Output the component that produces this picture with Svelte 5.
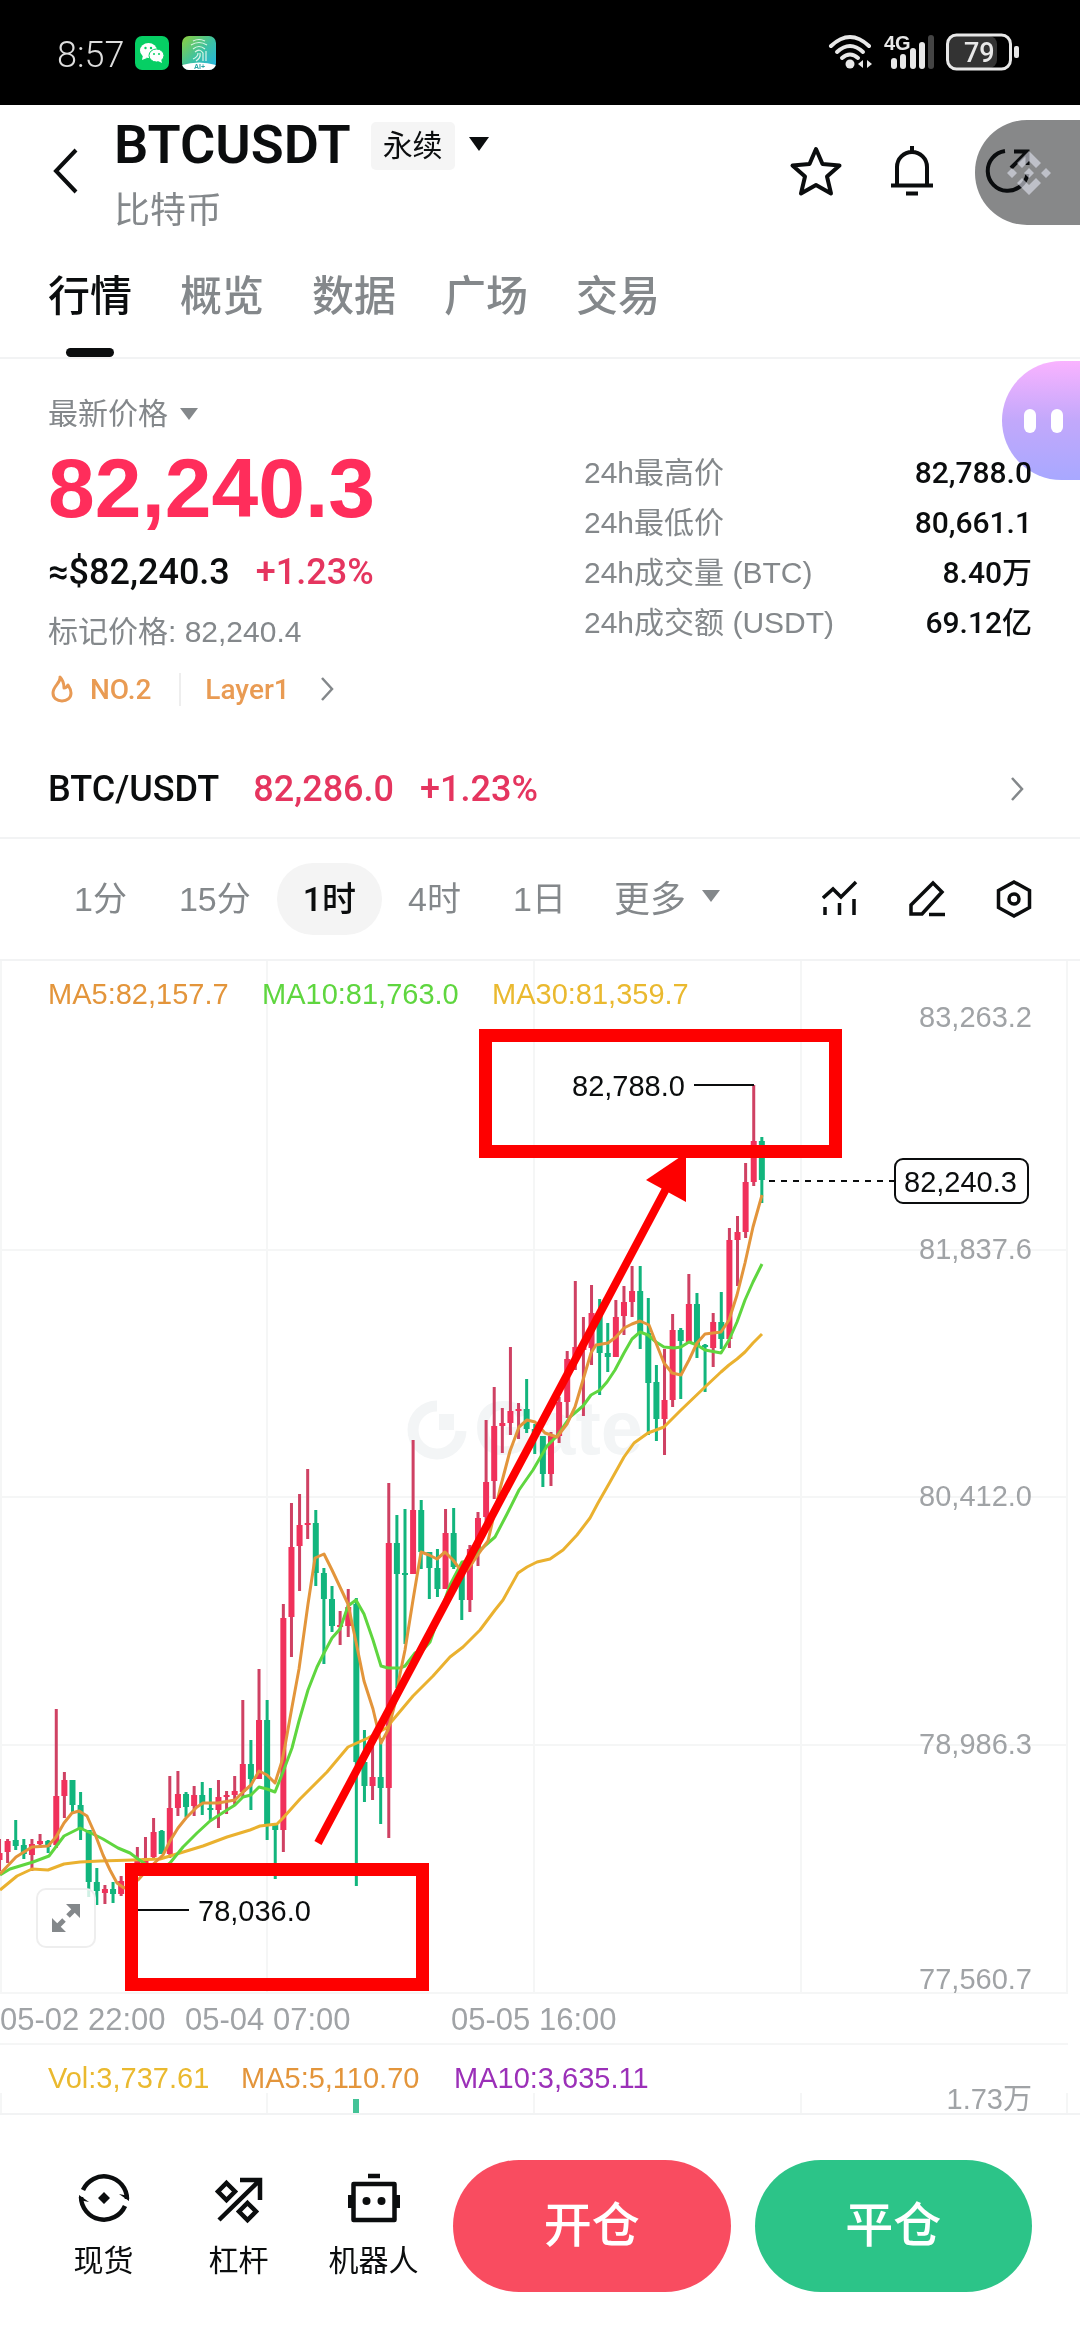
<script>
  const tabs = ['行情', '概览', '数据', '广场', '交易']
  const periods = ['1分', '15分', '1时', '4时', '1日']

  let activeTab = $state('行情')
  let activePeriod = $state('1时')

  const stats = [
    { label: '24h最高价', value: '82,788.0' },
    { label: '24h最低价', value: '80,661.1' },
    { label: '24h成交量 (BTC)', value: '8.40万' },
    { label: '24h成交额 (USDT)', value: '69.12亿' }
  ]

  const axis = [
    { y: 56, text: '83,263.2' },
    { y: 288, text: '81,837.6', line: true },
    { y: 535, text: '80,412.0', line: true },
    { y: 783, text: '78,986.3', line: true },
    { y: 1018, text: '77,560.7' }
  ]

  const dates = [
    { x: 0, text: '05-02 22:00' },
    { x: 185, text: '05-04 07:00' },
    { x: 451, text: '05-05 16:00' }
  ]

  const columns = [1, 267, 534, 801, 1067]

  // [rising, high, body top, body bottom, low] in chart units
  const candles = [
    [1, 878, 892, 899, 910], [1, 878, 880, 891, 902], [0, 859, 879, 885, 889],
    [0, 878, 884, 893, 898], [1, 878, 883, 894, 910], [1, 873, 880, 883, 887],
    [0, 879, 880, 886, 892], [1, 748, 835, 884, 887], [1, 811, 819, 835, 857],
    [0, 819, 819, 844, 852], [0, 831, 844, 869, 879], [0, 869, 869, 921, 936],
    [0, 907, 921, 930, 944], [1, 924, 928, 932, 943], [0, 921, 928, 933, 942],
    [1, 915, 920, 933, 935], [1, 904, 906, 912, 914], [1, 886, 899, 905, 910],
    [1, 876, 897, 905, 910], [1, 857, 871, 896, 897], [0, 869, 870, 893, 893],
    [1, 815, 847, 893, 897], [1, 810, 833, 847, 855], [0, 831, 833, 846, 856],
    [1, 825, 834, 845, 855], [0, 821, 834, 843, 854], [0, 827, 847, 848, 859],
    [1, 819, 836, 849, 867], [1, 830, 834, 836, 853], [1, 815, 830, 834, 844],
    [1, 739, 803, 831, 836], [0, 779, 803, 818, 849], [1, 708, 759, 818, 818],
    [0, 739, 759, 863, 879], [0, 863, 864, 869, 918], [1, 643, 657, 869, 891],
    [1, 542, 586, 656, 696], [1, 533, 564, 585, 630], [1, 508, 562, 564, 578],
    [0, 549, 562, 612, 625], [0, 607, 612, 638, 703], [0, 625, 638, 665, 671],
    [1, 650, 664, 666, 684], [1, 628, 646, 665, 676], [0, 637, 643, 801, 925],
    [0, 769, 801, 825, 841], [1, 781, 816, 825, 839], [0, 777, 816, 827, 863],
    [1, 522, 582, 827, 877], [0, 554, 582, 613, 727], [0, 548, 612, 613, 683],
    [1, 479, 549, 613, 613], [0, 539, 549, 591, 608], [0, 591, 591, 607, 638],
    [0, 588, 607, 628, 636], [1, 548, 572, 628, 628], [0, 547, 572, 606, 608],
    [0, 606, 609, 639, 659], [1, 584, 588, 639, 651], [1, 551, 557, 588, 605],
    [1, 459, 521, 556, 565], [1, 426, 465, 520, 538], [1, 447, 462, 465, 492],
    [1, 386, 450, 462, 474], [1, 442, 448, 450, 478], [0, 418, 448, 468, 472],
    [0, 463, 468, 475, 493], [0, 475, 475, 513, 526], [1, 471, 475, 513, 525],
    [1, 436, 441, 475, 482], [1, 390, 398, 441, 457], [1, 320, 386, 399, 409],
    [1, 356, 384, 389, 455], [1, 324, 352, 387, 404], [0, 338, 352, 392, 434],
    [0, 362, 392, 396, 411], [1, 339, 356, 396, 396], [1, 325, 341, 355, 374],
    [1, 305, 330, 341, 356], [0, 305, 330, 372, 388], [0, 337, 372, 422, 474],
    [0, 404, 421, 458, 480], [1, 388, 439, 458, 494], [1, 353, 369, 439, 446],
    [0, 367, 369, 380, 438], [1, 313, 343, 381, 381], [0, 332, 343, 384, 397],
    [0, 383, 384, 386, 431], [1, 352, 361, 387, 406], [0, 331, 361, 378, 388],
    [1, 267, 279, 378, 387], [1, 255, 271, 279, 325], [1, 202, 221, 271, 277],
    [1, 124, 180, 221, 225], [0, 176, 180, 219, 242]
  ]

  const candleX = (index) => index * 8.11 - 0.5

  const ma5 =
    '0,913 16,896 32,886 48,885 56,876 64,862 72,852 79,850 87,855 95,873 103,894 110,909 117,922 124,927 138,919 147,909 163,894 170,880 178,867 186,857 197,846 203,842 218,842 235,839 243,831 251,824 259,810 267,814 275,822 282,800 285,785 292,746 299,708 308,643 315,597 324,593 332,609 340,626 348,643 356,681 364,720 373,748 381,782 388,769 397,735 399,718 405,689 413,639 421,591 429,594 437,598 445,591 453,599 459,607 467,609 473,601 482,588 488,580 500,528 510,490 519,466 527,459 535,461 545,472 557,476 567,463 575,446 583,419 591,392 596,384 608,382 616,376 624,367 632,363 640,360 649,364 656,382 664,402 672,412 681,414 689,399 697,382 705,373 713,372 721,371 729,359 737,334 745,302 753,266 762,234'
  const ma10 =
    '0,914 10,908 33,901 49,895 64,875 80,867 93,873 103,878 118,887 130,892 138,898 147,904 160,909 170,902 183,886 197,872 210,860 227,849 235,844 243,836 251,834 259,826 267,828 275,831 283,811 292,787 299,760 308,729 317,706 324,692 332,677 340,668 348,645 356,639 364,653 373,679 381,705 388,707 400,707 405,705 415,692 423,689 430,681 438,658 450,624 462,601 470,600 480,589 495,576 507,553 519,529 533,509 547,485 557,475 570,456 583,445 591,434 600,429 607,421 615,409 624,392 632,378 640,371 648,374 656,381 664,386 674,387 681,386 689,381 697,384 705,389 721,392 729,379 737,361 745,339 753,321 762,303'
  const ma30 =
    '0,929 17,915 32,908 48,909 64,903 80,901 100,900 133,899 160,898 180,892 203,885 227,876 250,869 260,865 277,863 283,857 300,838 327,811 348,786 368,777 388,766 392,760 413,735 433,715 450,696 463,686 480,669 495,649 503,639 518,612 527,606 537,601 550,598 563,589 577,574 590,557 598,542 610,521 624,496 634,482 648,472 664,466 681,449 705,426 721,411 729,404 737,398 745,391 753,382 762,373'
</script>

<div class="page">
  <div class="status-bar">
    <span class="clock">8:57</span>
    <svg class="app-icon" viewBox="0 0 34 34" aria-hidden="true">
      <rect width="34" height="34" rx="7" fill="#06cf64" />
      <ellipse cx="13.500" cy="14.500" rx="8.500" ry="7.500" fill="#fff" />
      <path d="M8 19l-1 5 5-2z" fill="#fff" />
      <ellipse cx="21.500" cy="19.500" rx="7.500" ry="6.500" fill="#fff" stroke="#06cf64" stroke-width="1" />
      <path d="M23 25l4 2-1-4z" fill="#fff" />
      <g fill="#06cf64">
        <circle cx="10.500" cy="12" r="1.200" /><circle cx="16" cy="12" r="1.200" />
        <circle cx="19" cy="18" r="1" /><circle cx="24" cy="18" r="1" />
      </g>
    </svg>
    <svg class="app-icon app-icon--ai" viewBox="0 0 34 34" aria-hidden="true">
      <defs>
        <linearGradient id="aiFill" x1="0" y1="0" x2="1" y2="1">
          <stop offset="0" stop-color="#8fcf3c" />
          <stop offset="0.5" stop-color="#3ec2a0" />
          <stop offset="1" stop-color="#1fb2e8" />
        </linearGradient>
        <clipPath id="aiClip"><rect width="34" height="34" rx="7" /></clipPath>
      </defs>
      <g clip-path="url(#aiClip)">
        <rect width="34" height="34" fill="url(#aiFill)" />
        <path d="M0 29Q17 24 34 29V34H0z" fill="#fff" />
        <g fill="none" stroke="#d9f5e6" stroke-width="1.200">
          <path d="M11 5q6-3 12 0M9 9q8-5 16 0M11 13q6-5 12 0M13 16q5-4 8 1v8M11 23q5-2 5-6M18 17q1 5-4 8M24 15v10" />
        </g>
        <text x="12" y="33" font-size="7" font-weight="700" fill="#2aa6a6">AI+</text>
      </g>
    </svg>
    <svg class="signal" viewBox="0 0 192 40" aria-hidden="true">
      <g fill="none" stroke="#e8e8e8" stroke-width="4" stroke-linecap="round">
        <path d="M3 13Q22-5 41 13" />
        <path d="M9 19Q22 7 35 19" />
        <path d="M14 25Q22 18 30 25" />
      </g>
      <circle cx="22" cy="31" r="4.500" fill="#e8e8e8" />
      <path d="M30 31l5-4v8zM44 31l-5-4v8z" fill="#e8e8e8" />
      <text x="56" y="17" font-size="20" font-weight="700" fill="#e8e8e8">4G</text>
      <g fill="#e8e8e8">
        <rect x="63" y="25" width="6" height="11" rx="3" />
        <rect x="72" y="21" width="6" height="15" rx="3" />
        <rect x="82" y="15" width="6" height="21" rx="3" />
        <rect x="91" y="9" width="6" height="27" rx="3" />
      </g>
      <rect x="100" y="2" width="6" height="34" rx="3" fill="#444" />
      <rect x="120" y="3" width="49" height="32" rx="8" fill="#333" />
      <rect x="119.500" y="2" width="63" height="34" rx="9" fill="none" stroke="#e8e8e8" stroke-width="3" />
      <rect x="186" y="13" width="5" height="12" rx="2" fill="#e8e8e8" />
      <text x="136" y="29" font-size="27" class="battery">79</text>
    </svg>
  </div>

  <header class="topbar">
    <button class="icon-button back" aria-label="返回">
      <svg viewBox="0 0 26 46" width="26" height="46"><path d="M24 2L4 23l20 21" fill="none" stroke="#0b0d0e" stroke-width="4" /></svg>
    </button>
    <div class="title-block">
      <div class="title-row">
        <h1>BTCUSDT</h1>
        <span class="chip">永续</span>
        <svg viewBox="0 0 20 14" width="20" height="14" aria-hidden="true"><path d="M0 0h20L10 14z" fill="#0b0d0e" /></svg>
      </div>
      <p class="subtitle">比特币</p>
    </div>
    <div class="actions">
      <button class="icon-button" aria-label="收藏">
        <svg viewBox="0 0 48 48" width="48" height="48" overflow="visible">
          <path d="M24 2l6.500 15 17 1.500L35 29.500l4 17L24 38 9 46.500l4-17L.500 18.500l17-1.500z" fill="none" stroke="#0b0d0e" stroke-width="4" stroke-linejoin="round" />
        </svg>
      </button>
      <button class="icon-button" aria-label="提醒">
        <svg viewBox="0 0 48 48" width="48" height="48" overflow="visible">
          <path d="M9 37V20a15 15 0 0 1 30 0v17M3 38.500h42M24 5V-1M18 46.500h12" fill="none" stroke="#0b0d0e" stroke-width="4" />
        </svg>
      </button>
      <button class="icon-button" aria-label="分享">
        <svg viewBox="0 0 48 48" width="48" height="48" overflow="visible">
          <path d="M21 4A20 20 0 1 0 43.500 27M27 21L42 6M30 4.500h13.500V18" fill="none" stroke="#0b0d0e" stroke-width="4" />
        </svg>
      </button>
    </div>
  </header>

  <nav class="tabs">
    {#each tabs as tab (tab)}
      <button class="tab" class:tab--active={tab === activeTab} onclick={() => (activeTab = tab)}>{tab}</button>
    {/each}
  </nav>

  <section class="summary">
    <div class="quote">
      <button class="price-label">
        最新价格
        <svg viewBox="0 0 18 12" width="18" height="12" aria-hidden="true"><path d="M0 0h18L9 12z" fill="#84888b" /></svg>
      </button>
      <strong class="price">82,240.3</strong>
      <div class="fiat"><span>≈$82,240.3</span><span class="up">+1.23%</span></div>
      <p class="mark">标记价格: 82,240.4</p>
      <a class="tags" href="#rank">
        <svg viewBox="0 0 22 28" width="22" height="28" aria-hidden="true">
          <path d="M9 2C10 8 2 11 2 18c0 5 4 8 9 8s9-3 9-8c0-3-1-5-3-8-1 2-2 3-4 3 0-5-1-8-4-11z" fill="none" stroke="#e89a55" stroke-width="3" stroke-linejoin="round" />
        </svg>
        <span class="rank">NO.2</span>
        <span class="sector">Layer1</span>
        <svg viewBox="0 0 14 24" width="14" height="24" aria-hidden="true"><path d="M2 1l10 11L2 23" fill="none" stroke="#84888b" stroke-width="2.500" /></svg>
      </a>
    </div>
    <dl class="stats">
      {#each stats as stat (stat.label)}
        <div class="stat">
          <dt>{stat.label}</dt>
          <dd>{stat.value}</dd>
        </div>
      {/each}
    </dl>
  </section>

  <a class="spot" href="#spot">
    <span class="spot-pair">BTC/USDT</span>
    <span class="up">82,286.0</span>
    <span class="up">+1.23%</span>
    <svg class="spot-arrow" viewBox="0 0 14 24" width="14" height="24" aria-hidden="true"><path d="M2 1l10 11L2 23" fill="none" stroke="#84888b" stroke-width="2.500" /></svg>
  </a>

  <div class="periods">
    {#each periods as period (period)}
      <button class="period" class:period--active={period === activePeriod} onclick={() => (activePeriod = period)}>{period}</button>
    {/each}
    <button class="period period--more">
      更多
      <svg viewBox="0 0 18 12" width="18" height="12" aria-hidden="true"><path d="M0 0h18L9 12z" fill="#84888b" /></svg>
    </button>
    <div class="tools">
      <button class="icon-button" aria-label="指标">
        <svg viewBox="0 0 36 40" width="36" height="40">
          <path d="M1 19l10-9 8 8L34 3" fill="none" stroke="#0b0d0e" stroke-width="3.500" />
          <path d="M3 28v8M17.500 24v12M32 20v16" fill="none" stroke="#0b0d0e" stroke-width="3.500" />
        </svg>
      </button>
      <button class="icon-button" aria-label="画线">
        <svg viewBox="0 0 36 40" width="36" height="40">
          <path d="M24 4l9 9-20 22H2v-9z" fill="none" stroke="#0b0d0e" stroke-width="3.500" />
          <path d="M20 35.500h16" stroke="#0b0d0e" stroke-width="3.500" />
        </svg>
      </button>
      <button class="icon-button" aria-label="设置">
        <svg viewBox="0 0 36 40" width="36" height="40">
          <path d="M18 3l15.500 8.500v17L18 37 2.500 28.500v-17z" fill="none" stroke="#0b0d0e" stroke-width="3.500" />
          <circle cx="18" cy="20" r="5" fill="none" stroke="#0b0d0e" stroke-width="3.500" />
        </svg>
      </button>
    </div>
  </div>

  <div class="chart">
    <svg class="chart-canvas" viewBox="0 0 1080 1152">
      <g class="grid">
        {#each columns as x (x)}
          <path d="M{x} 0V1032M{x} 1132V1152" />
        {/each}
        {#each axis.filter((tick) => tick.line) as tick (tick.y)}
          <path d="M0 {tick.y + 1}H1068" />
        {/each}
        <path d="M0 1032H1068M0 1083H1068" />
      </g>

      <g class="watermark">
        <path d="M437 445a24 24 0 1 0 24 25" />
        <rect x="439" y="453" width="15" height="16" />
        <text x="474" y="493">Gate</text>
      </g>

      <g class="axis">
        {#each axis as tick (tick.y)}
          <text x="1032" y={tick.y + 10} text-anchor="end">{tick.text}</text>
        {/each}
        {#each dates as date (date.x)}
          <text class="date" x={date.x} y="1069">{date.text}</text>
        {/each}
        <text x="1032" y="1148" text-anchor="end">1.73万</text>
      </g>

      {#each candles as [rising, high, top, bottom, low], i}
        <g class={rising ? 'candle candle--up' : 'candle candle--down'}>
          <rect class="wick" x={candleX(i) - 1.5} y={high} width="3" height={low - high} />
          <rect x={candleX(i) - 3} y={top} width="6" height={Math.max(bottom - top, 2)} />
        </g>
      {/each}
      <rect x="353" y="1138" width="6" height="14" fill="#44c397" />

      <polyline class="line" points={ma30} stroke="#eab12f" />
      <polyline class="line" points={ma10} stroke="#5fd63f" />
      <polyline class="line" points={ma5} stroke="#e3953b" />

      <text class="legend" x="48" y="43">
        <tspan fill="#e3953b">MA5:82,157.7</tspan>
        <tspan fill="#5fd63f" x="262">MA10:81,763.0</tspan>
        <tspan fill="#eab92f" x="492">MA30:81,359.7</tspan>
      </text>
      <text class="legend" x="48" y="1127">
        <tspan fill="#eab92f">Vol:3,737.61</tspan>
        <tspan fill="#e3953b" x="241">MA5:5,110.70</tspan>
        <tspan fill="#9b30b8" x="454">MA10:3,635.11</tspan>
      </text>

      <g class="marker">
        <path d="M694 124H754M138 949H189" />
        <path d="M769 220H895" stroke-dasharray="6 6" />
        <rect x="895" y="198" width="133" height="44" rx="8" />
        <text x="572" y="135">82,788.0</text>
        <text x="198" y="960">78,036.0</text>
        <text x="904" y="231">82,240.3</text>
      </g>

      <g class="note">
        <rect x="485.500" y="74.500" width="350" height="116" />
        <rect x="131.500" y="908.500" width="291" height="115" />
        <path d="M318 882L667 226" />
        <path class="note-head" d="M686 192V241L646 219z" />
      </g>
    </svg>
    <button class="expand" aria-label="全屏">
      <svg viewBox="0 0 28 28" width="28" height="28">
        <path d="M14 0h14v14zM0 14v14h14z" fill="#84888b" />
        <path d="M16 12l6-6M6 22l6-6" stroke="#84888b" stroke-width="5" />
      </svg>
    </button>
  </div>

  <footer class="trade-bar">
    <nav class="shortcuts">
      <a class="shortcut" href="#spot-trade">
        <svg viewBox="0 0 52 52" width="52" height="52" aria-hidden="true">
          <path d="M5 18A23 23 0 0 1 49 27M47 34A23 23 0 0 1 3 25" fill="none" stroke="#0b0d0e" stroke-width="4.500" />
          <path d="M41 22l10 2v5zM11 30L1 28v-5zM26 20l6 6-6 6-6-6z" fill="#0b0d0e" />
        </svg>
        现货
      </a>
      <a class="shortcut" href="#margin">
        <svg viewBox="0 0 52 52" width="52" height="52" aria-hidden="true">
          <path d="M6 48L46 9M27 8h20v20M13.500 11l8.500 8.500-8.500 8.500L5 19.500zM34.500 31l8.500 8.500-8.500 8.500-8.500-8.500z" fill="none" stroke="#0b0d0e" stroke-width="4.500" />
        </svg>
        杠杆
      </a>
      <a class="shortcut" href="#bots">
        <svg viewBox="0 0 52 52" width="52" height="52" aria-hidden="true">
          <path d="M5.500 12h41v36h-41zM20 4h12" fill="none" stroke="#0b0d0e" stroke-width="4.500" stroke-linejoin="round" />
          <path d="M0 23h4v13H0zM48 23h4v13h-4z" fill="#0b0d0e" />
          <circle cx="18.500" cy="29" r="4" fill="#0b0d0e" />
          <circle cx="33.500" cy="29" r="4" fill="#0b0d0e" />
        </svg>
        机器人
      </a>
    </nav>
    <div class="trades">
      <button class="trade trade--open">开仓</button>
      <button class="trade trade--close">平仓</button>
    </div>
  </footer>

  <div class="float float--dark">
    <svg viewBox="0 0 44 44" width="44" height="44" aria-hidden="true">
      <g fill="#e3e6f2" opacity="0.6">
        <path d="M22 0l12 12-5 5-7-7-7 7-5-5zM22 44L10 32l5-5 7 7 7-7 5 5zM5 17l5 5-5 5-5-5zM39 17l5 5-5 5-5-5zM22 17l5 5-5 5-5-5z" />
      </g>
    </svg>
  </div>
  <div class="float float--bot"><i></i><i></i></div>
</div>

<style>
  :global(body) {
    background: #fff;
  }

  .page {
    position: relative;
    display: flex;
    flex-direction: column;
    min-height: 100vh;
    overflow: hidden;
    background: #fff;
    color: #0b0d0e;
    font-family: 'Liberation Sans', 'Noto Sans CJK SC', sans-serif;
    font-size: 30px;
  }

  button {
    border: 0;
    padding: 0;
    background: none;
    color: inherit;
    font: inherit;
    cursor: pointer;
  }

  a {
    color: inherit;
    text-decoration: none;
  }

  h1,
  p,
  dl,
  dd {
    margin: 0;
  }

  svg {
    display: block;
    flex: none;
  }

  .up {
    color: #e5355f;
  }

  .status-bar {
    display: flex;
    align-items: center;
    height: 105px;
    padding: 0 60px 0 57px;
    background: #000;
    color: #ddd;
  }

  .clock {
    width: 78px;
    padding-top: 4px;
    font-family: Roboto, sans-serif;
    font-size: 36px;
    font-weight: 300;
  }

  .app-icon {
    width: 34px;
    height: 34px;
  }

  .app-icon--ai {
    margin-left: 13px;
  }

  .signal {
    width: 192px;
    height: 40px;
    margin-left: auto;
  }

  .battery {
    fill: #e8e8e8;
    font-family: Roboto, sans-serif;
    font-weight: 500;
  }

  .topbar {
    display: flex;
    padding: 8px 48px 0;
  }

  .icon-button {
    display: flex;
    align-items: center;
    justify-content: center;
  }

  .back,
  .actions {
    height: 116px;
  }

  .back {
    width: 34px;
  }

  .title-block {
    margin-left: 32px;
  }

  .title-row {
    display: flex;
    align-items: center;
    height: 62px;
  }

  h1 {
    font-family: Roboto, sans-serif;
    font-size: 54px;
    font-weight: 600;
  }

  .chip {
    margin: 4px 14px 0 20px;
    padding: 0 12px;
    border-radius: 5px;
    background: #f5f5f5;
    line-height: 48px;
  }

  .subtitle {
    color: #84888b;
    font-size: 36px;
    line-height: 72px;
  }

  .actions {
    display: flex;
    gap: 48px;
    margin-left: auto;
  }

  .tabs {
    display: flex;
    gap: 48px;
    padding: 0 48px;
    border-bottom: 2px solid #f2f3f4;
  }

  .tab {
    position: relative;
    height: 110px;
    padding-bottom: 20px;
    color: #84888b;
    font-size: 42px;
    font-weight: 500;
  }

  .tab--active {
    color: #0b0d0e;
  }

  .tab--active::after {
    content: '';
    position: absolute;
    bottom: 0;
    left: 18px;
    width: 48px;
    height: 9px;
    border-radius: 5px;
    background: #0b0d0e;
  }

  .summary {
    display: grid;
    grid-template-columns: 536px 1fr;
    padding: 30px 48px 0;
  }

  .quote {
    display: flex;
    flex-direction: column;
    align-items: flex-start;
  }

  .price-label {
    display: flex;
    align-items: center;
    gap: 12px;
    color: #84888b;
    line-height: 50px;
  }

  .price {
    color: #ff2d5b;
    font-size: 84px;
    line-height: 98px;
  }

  .fiat {
    display: flex;
    gap: 26px;
    font-family: Roboto, sans-serif;
    font-size: 36px;
    font-weight: 500;
    line-height: 70px;
  }

  .mark {
    color: #84888b;
    line-height: 50px;
  }

  .tags {
    display: flex;
    align-items: center;
    height: 64px;
    padding-left: 3px;
    color: #e99b53;
    font-family: Roboto, sans-serif;
    font-size: 28px;
    font-weight: 500;
  }

  .rank {
    margin-left: 17px;
    padding-right: 28px;
    border-right: 2px solid #eee;
  }

  .sector {
    padding: 0 30px 0 24px;
  }

  .stats {
    padding-top: 59px;
  }

  .stat {
    display: flex;
    justify-content: space-between;
    line-height: 50px;
  }

  .stat dt {
    color: #84888b;
  }

  .stat dd {
    font-family: Roboto, 'Noto Sans CJK SC', sans-serif;
    font-weight: 500;
  }

  .spot {
    display: flex;
    align-items: center;
    height: 96px;
    padding: 20px 48px 0;
    border-bottom: 2px solid #f2f3f4;
    gap: 26px;
    font-family: Roboto, sans-serif;
    font-size: 36px;
    font-weight: 500;
  }

  .spot-pair {
    margin-right: 8px;
  }

  .spot-arrow {
    margin: 0 8px 0 auto;
  }

  .periods {
    display: flex;
    align-items: center;
    height: 120px;
    padding: 0 48px;
    border-bottom: 2px solid #f2f3f4;
  }

  .period {
    display: flex;
    align-items: center;
    height: 72px;
    padding: 0 26px 6px;
    border-radius: 36px;
    color: #84888b;
    font-size: 34px;
    white-space: nowrap;
  }

  .period--active {
    background: #f4f4f4;
    color: #0b0d0e;
    font-family: Roboto, 'Noto Sans CJK SC', sans-serif;
    font-weight: 500;
  }

  .period--more {
    gap: 16px;
    padding: 0 22px 6px;
    font-size: 36px;
  }

  .tools {
    display: flex;
    gap: 51px;
    margin-left: auto;
  }

  .chart {
    position: relative;
  }

  .chart-canvas {
    width: 100%;
    height: auto;
    overflow: visible;
    font-size: 29px;
  }

  .grid path {
    fill: none;
    stroke: #f5f6f6;
    stroke-width: 2;
  }

  .watermark {
    fill: #f3f5f6;
    font-size: 76px;
    font-weight: 700;
  }

  .watermark path {
    fill: none;
    stroke: #f3f5f6;
    stroke-width: 11;
  }

  .axis {
    fill: #a0a3a6;
  }

  .date {
    font-size: 31px;
  }

  .candle--up {
    fill: #f0315b;
  }

  .candle--up .wick {
    fill: #cf4163;
  }

  .candle--down {
    fill: #12b57d;
  }

  .line {
    fill: none;
    stroke-width: 3;
    stroke-linejoin: round;
  }

  .marker {
    fill: #0b0d0e;
  }

  .marker path,
  .marker rect {
    fill: none;
    stroke: #0b0d0e;
    stroke-width: 2;
  }

  .note rect {
    fill: none;
    stroke: #fe0000;
    stroke-width: 13;
  }

  .note path {
    fill: none;
    stroke: #fe0000;
    stroke-width: 8;
  }

  .note .note-head {
    fill: #fe0000;
    stroke: none;
  }

  .expand {
    position: absolute;
    bottom: 165px;
    left: 36px;
    display: flex;
    align-items: center;
    justify-content: center;
    width: 60px;
    height: 60px;
    border: 2px solid #eee;
    border-radius: 10px;
    background: rgba(255, 255, 255, 0.8);
  }

  .trade-bar {
    display: flex;
    align-items: flex-start;
    padding: 45px 48px 48px 36px;
    border-top: 2px solid #f2f3f4;
  }

  .shortcuts {
    display: flex;
    flex: none;
    width: 405px;
    padding-top: 12px;
  }

  .shortcut {
    display: flex;
    flex: 1 0 0;
    flex-direction: column;
    align-items: center;
    gap: 17px;
    line-height: 40px;
  }

  .trades {
    display: flex;
    flex: 1;
    gap: 24px;
    margin-left: 12px;
  }

  .trade {
    flex: 1;
    height: 132px;
    padding-bottom: 10px;
    border-radius: 66px;
    color: #fff;
    font-size: 48px;
    font-weight: 500;
  }

  .trade--open {
    background: #f94c60;
  }

  .trade--close {
    background: #2cc488;
  }

  /* side widgets docked to the right edge, over the page */
  .float {
    position: absolute;
    right: 0;
    display: flex;
    align-items: center;
    pointer-events: none;
  }

  .float--dark {
    top: 120px;
    width: 73px;
    height: 105px;
    padding-left: 32px;
    border-radius: 52px 0 0 52px;
    background: rgba(10, 12, 14, 0.49);
  }

  .float--bot {
    top: 361px;
    gap: 15px;
    width: 56px;
    height: 119px;
    padding-left: 22px;
    border-radius: 60px 0 0 60px;
    background: linear-gradient(#f9b3ff, #c2a8fb 50%, #a8a8ff);
    mix-blend-mode: multiply;
  }

  .float--bot i {
    width: 12px;
    height: 24px;
    border-radius: 6px;
    background: #fff;
  }
</style>
